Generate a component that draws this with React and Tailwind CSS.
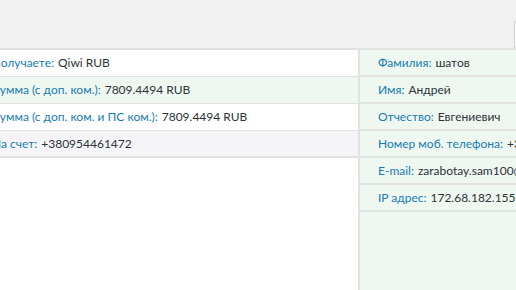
export default function App() {
  const left = [
    { l: "Получаете:", v: "Qiwi RUB", bg: "bg-white" },
    { l: "Сумма (с доп. ком.):", v: "7809.4494 RUB", bg: "bg-[#eef8f0]" },
    { l: "Сумма (с доп. ком. и ПС ком.):", v: "7809.4494 RUB", bg: "bg-white" },
    { l: "На счет:", v: "+380954461472", bg: "bg-[#f5f5f7]" },
  ];
  const right = [
    { l: "Фамилия:", v: "шатов" },
    { l: "Имя:", v: "Андрей" },
    { l: "Отчество:", v: "Евгениевич" },
    { l: "Номер моб. телефона:", v: "+380954461472" },
    { l: "E-mail:", v: "zarabotay.sam100@gmail.com" },
    { l: "IP адрес:", v: "172.68.182.155" },
  ];
  return (
    <div
      className="w-[516px] h-[290px] overflow-hidden bg-white flex flex-col text-[12px] text-[#2c3338]"
      style={{ fontFamily: 'Lato, "Open Sans", sans-serif' }}
    >
      <div className="h-[48px] shrink-0 bg-[#f1f1f1] flex pl-[514px] pt-[21px]">
        <div className="w-[60px] h-[27px] shrink-0 border border-[#d6d6d6] bg-[#f7f7f7]" />
      </div>
      <div className="flex flex-1 border-t-2 border-[#e2e2e2] min-h-0">
        <div className="w-[366px] shrink-0 -ml-[8px] bg-white">
          {left.map((r, i) => (
            <div
              key={i}
              className={`h-[27px] flex items-center whitespace-nowrap border-b ${i === 3 ? "border-b-2" : ""} border-[#e2e2e2] ${r.bg}`}
            >
              <span className="text-[#1a7bb0]">{r.l}</span>
              <span className="ml-[4px]">{r.v}</span>
            </div>
          ))}
        </div>
        <div className="flex-1 bg-[#eef8f0] border-l-2 border-[#e2e2e2] overflow-hidden">
          {right.map((r, i) => (
            <div
              key={i}
              className="h-[27px] flex items-center whitespace-nowrap border-b-2 border-[#e2e2e2] pl-[18px]"
            >
              <span className="text-[#1a7bb0]">{r.l}</span>
              <span className="ml-[4px]">{r.v}</span>
            </div>
          ))}
        </div>
      </div>
    </div>
  );
}
